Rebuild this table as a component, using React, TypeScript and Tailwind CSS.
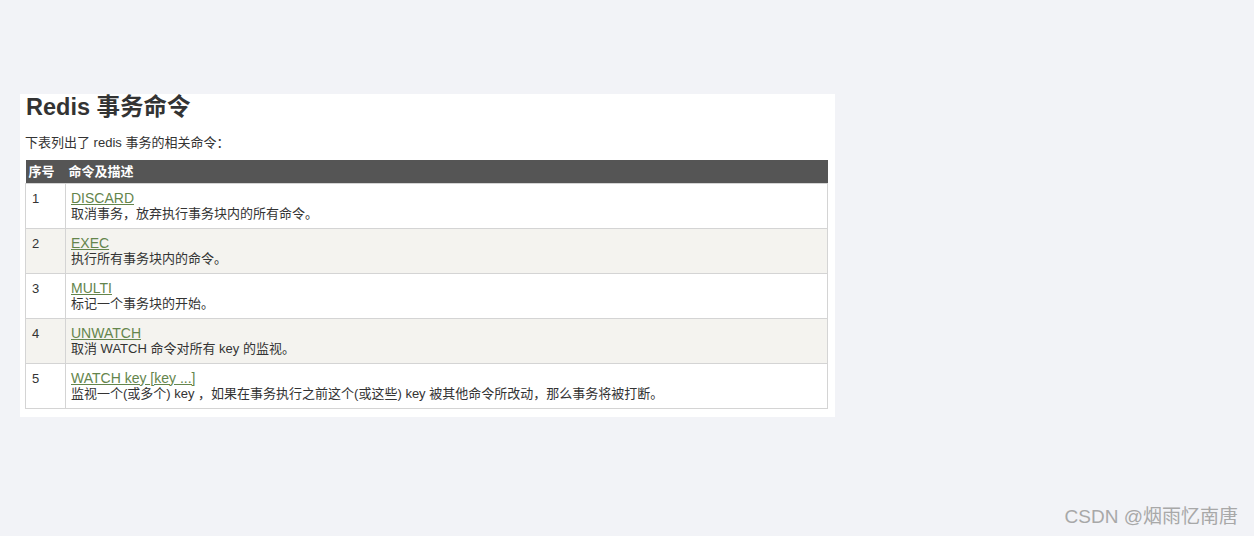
import React from "react";

const rows = [
  { n: "1", cmd: "DISCARD", desc: "取消事务，放弃执行事务块内的所有命令。" },
  { n: "2", cmd: "EXEC", desc: "执行所有事务块内的命令。" },
  { n: "3", cmd: "MULTI", desc: "标记一个事务块的开始。" },
  { n: "4", cmd: "UNWATCH", desc: "取消 WATCH 命令对所有 key 的监视。" },
  {
    n: "5",
    cmd: "WATCH key [key ...]",
    desc: "监视一个(或多个) key ，如果在事务执行之前这个(或这些) key 被其他命令所改动，那么事务将被打断。",
  },
];

export default function App() {
  return (
    <div
      className="relative min-h-[536px] w-full bg-[#f2f3f7] pt-[94px] pl-[20px] text-[#333]"
      style={{ fontFamily: '"Liberation Sans", "Noto Sans CJK SC", sans-serif' }}
    >
      <div className="w-[815px] bg-white px-[5px] pb-[8px]">
        <h2 className="m-0 pl-[1px] text-[23.5px] font-bold leading-[26px] text-[#333]">Redis 事务命令</h2>
        <p className="mt-[15px] text-[13px] leading-[16px]">下表列出了 redis 事务的相关命令：</p>
        <table className="mt-[9px] w-[803px] border-collapse text-[13px] leading-[15px]">
          <thead>
            <tr className="h-[23px] bg-[#555555] text-white">
              <th className="w-[40px] px-[3px] text-left font-bold">序号</th>
              <th className="px-[3px] text-left font-bold">命令及描述</th>
            </tr>
          </thead>
          <tbody>
            {rows.map((r, i) => (
              <tr key={r.n} className={i % 2 === 1 ? "bg-[#f4f3ef]" : "bg-white"}>
                <td className="border border-[#d4d4d4] px-[6px] pt-[7px] pb-[7px] align-top">{r.n}</td>
                <td className="border border-[#d4d4d4] px-[5px] pt-[7px] pb-[7px] align-top">
                  <a href="#" className="block w-fit text-[14px] leading-[15px] text-[#64854c] underline">
                    {r.cmd}
                  </a>
                  <div className="leading-[15px]">{r.desc}</div>
                </td>
              </tr>
            ))}
          </tbody>
        </table>
      </div>
      <div className="absolute right-[16px] bottom-[8px] text-[19px] leading-[22px] text-[#a8a8a8]">
        CSDN @烟雨忆南唐
      </div>
    </div>
  );
}
